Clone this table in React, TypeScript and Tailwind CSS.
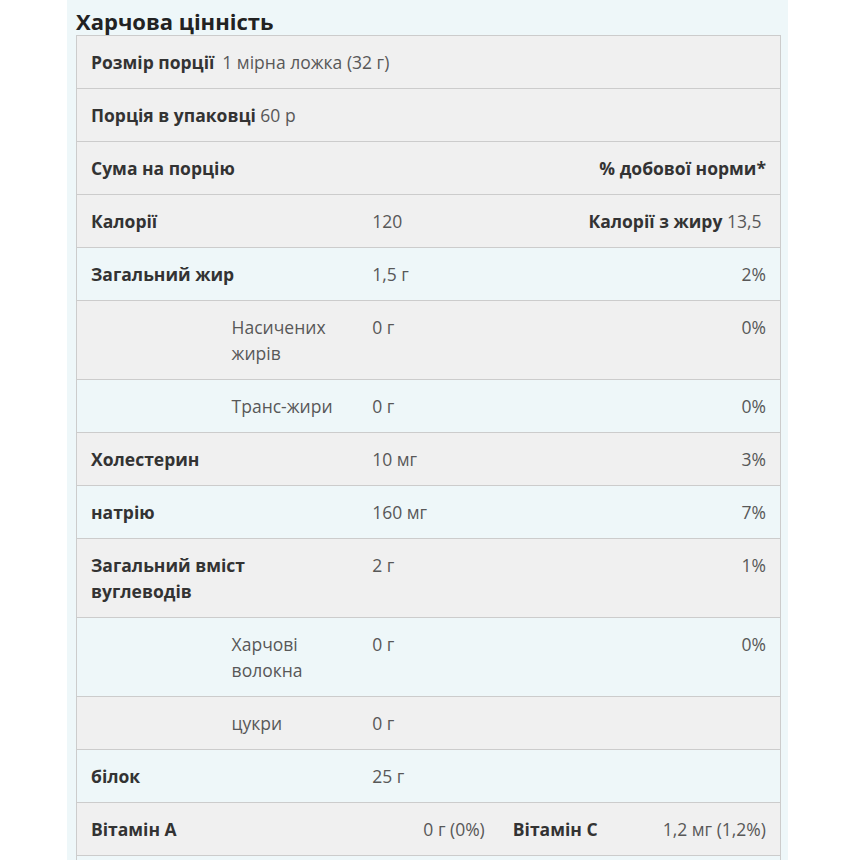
import React from "react";

type Cell = { content?: React.ReactNode; span: 1 | 2 | 3 | 4 | 5; align?: "left" | "right" };

const spanCls: Record<number, string> = {
  1: "col-span-1",
  2: "col-span-2",
  3: "col-span-3",
  4: "col-span-4",
  5: "col-span-5",
};

const B = ({ children }: { children: React.ReactNode }) => (
  <span className="font-bold text-[#333]">{children}</span>
);
const V = ({ children }: { children: React.ReactNode }) => (
  <span className="text-[#585858]">{children}</span>
);

const rows: { cells: Cell[] }[] = [
  {
    cells: [
      {
        span: 5,
        content: (
          <>
            <B>Розмір порції</B>
            <span className="ml-[8px]" />
            <V>1 мірна ложка (32 г)</V>
          </>
        ),
      },
    ],
  },
  {
    cells: [
      {
        span: 5,
        content: (
          <>
            <B>Порція в упаковці</B> <V>60 р</V>
          </>
        ),
      },
    ],
  },
  {
    cells: [
      { span: 3, content: <B>Сума на порцію</B> },
      { span: 2, align: "right", content: <B>% добової норми*</B> },
    ],
  },
  {
    cells: [
      { span: 2, content: <B>Калорії</B> },
      { span: 1, content: <V>120</V> },
      {
        span: 2,
        align: "right",
        content: (
          <>
            <B>Калорії з жиру</B> <V>13,5{"\u00a0"}</V>
          </>
        ),
      },
    ],
  },
  {
    cells: [
      { span: 2, content: <B>Загальний жир</B> },
      { span: 1, content: <V>1,5 г</V> },
      { span: 2, align: "right", content: <V>2%</V> },
    ],
  },
  {
    cells: [
      { span: 1 },
      { span: 1, content: <V>Насичених жирів</V> },
      { span: 1, content: <V>0 г</V> },
      { span: 2, align: "right", content: <V>0%</V> },
    ],
  },
  {
    cells: [
      { span: 1 },
      { span: 1, content: <V>Транс-жири</V> },
      { span: 1, content: <V>0 г</V> },
      { span: 2, align: "right", content: <V>0%</V> },
    ],
  },
  {
    cells: [
      { span: 2, content: <B>Холестерин</B> },
      { span: 1, content: <V>10 мг</V> },
      { span: 2, align: "right", content: <V>3%</V> },
    ],
  },
  {
    cells: [
      { span: 2, content: <B>натрію</B> },
      { span: 1, content: <V>160 мг</V> },
      { span: 2, align: "right", content: <V>7%</V> },
    ],
  },
  {
    cells: [
      { span: 2, content: <B>Загальний вміст вуглеводів</B> },
      { span: 1, content: <V>2 г</V> },
      { span: 2, align: "right", content: <V>1%</V> },
    ],
  },
  {
    cells: [
      { span: 1 },
      { span: 1, content: <V>Харчові волокна</V> },
      { span: 1, content: <V>0 г</V> },
      { span: 2, align: "right", content: <V>0%</V> },
    ],
  },
  {
    cells: [
      { span: 1 },
      { span: 1, content: <V>цукри</V> },
      { span: 1, content: <V>0 г</V> },
      { span: 2, align: "right", content: null },
    ],
  },
  {
    cells: [
      { span: 2, content: <B>білок</B> },
      { span: 1, content: <V>25 г</V> },
      { span: 2, align: "right", content: null },
    ],
  },
  {
    cells: [
      { span: 2, content: <B>Вітамін A</B> },
      { span: 1, align: "right", content: <V>0 г (0%)</V> },
      { span: 1, content: <B>Вітамін C</B> },
      { span: 1, align: "right", content: <V>1,2 мг (1,2%)</V> },
    ],
  },
];

const grayRows = new Set([0, 1, 2, 3]);

export default function App() {
  return (
    <div
      className="h-[860px] overflow-hidden bg-white"
      style={{ fontFamily: '"Open Sans", "Noto Sans", sans-serif' }}
    >
      <div className="ml-[67px] w-[721px] h-full bg-[#eef7f9] pl-[9px] pr-[7px]">
        <h2 className="pt-[7px] leading-[28px] text-[22px] font-bold text-[#222]">
          Харчова цінність
        </h2>
        <div className="border border-[#cccccc] w-[705px] text-[17.5px] leading-[26px]">
          {rows.map((r, i) => {
            const gray = grayRows.has(i) || (i - 3) % 2 === 0;
            return (
              <div
                key={i}
                className={`grid grid-cols-5 border-b border-[#cccccc] ${
                  gray ? "bg-[#f0f0f0]" : "bg-[#eef7f9]"
                }`}
              >
                {r.cells.map((c, j) => (
                  <div
                    key={j}
                    className={`${spanCls[c.span]} px-[14px] py-[13px] ${
                      c.align === "right" ? "text-right" : "text-left"
                    }`}
                  >
                    {c.content}
                  </div>
                ))}
              </div>
            );
          })}
          <div className="h-[40px] bg-[#eef7f9]" />
        </div>
      </div>
    </div>
  );
}
